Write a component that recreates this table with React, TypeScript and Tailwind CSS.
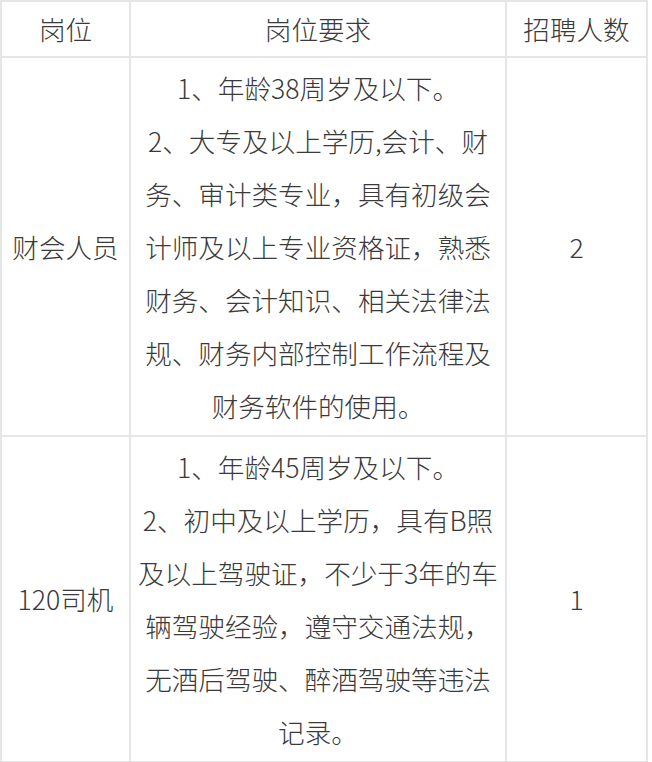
import React from "react";

const row1 = [
  "1、年龄38周岁及以下。",
  "2、大专及以上学历,会计、财",
  "务、审计类专业，具有初级会",
  "计师及以上专业资格证，熟悉",
  "财务、会计知识、相关法律法",
  "规、财务内部控制工作流程及",
  "财务软件的使用。",
];

const row2 = [
  "1、年龄45周岁及以下。",
  "2、初中及以上学历，具有B照",
  "及以上驾驶证，不少于3年的车",
  "辆驾驶经验，遵守交通法规，",
  "无酒后驾驶、醉酒驾驶等违法",
  "记录。",
];

function Lines({ lines }: { lines: string[] }) {
  return (
    <div className="flex flex-col items-center py-[3px]">
      {lines.map((l, i) => (
        <div key={i} className="whitespace-nowrap leading-[53px]">
          {l}
        </div>
      ))}
    </div>
  );
}

export default function App() {
  const cell = "bg-white flex items-center justify-center";
  return (
    <div
      className="w-[652px] h-[762px] overflow-hidden bg-white text-[#3a3a3a] text-[26.6px] font-light"
      style={{ fontFamily: '"Noto Sans CJK SC", "Noto Sans", sans-serif' }}
    >
      <div className="w-[648px] grid grid-cols-[127px_374px_139px] gap-[2px] p-[2px] bg-[#e6e6e6]">
        <div className={`${cell} h-[54px]`}>岗位</div>
        <div className={`${cell} h-[54px]`}>岗位要求</div>
        <div className={`${cell} h-[54px]`}>招聘人数</div>

        <div className={cell}>财会人员</div>
        <div className={cell}>
          <Lines lines={row1} />
        </div>
        <div className={cell}>2</div>

        <div className={cell}>120司机</div>
        <div className={cell}>
          <Lines lines={row2} />
        </div>
        <div className={cell}>1</div>
      </div>
    </div>
  );
}
